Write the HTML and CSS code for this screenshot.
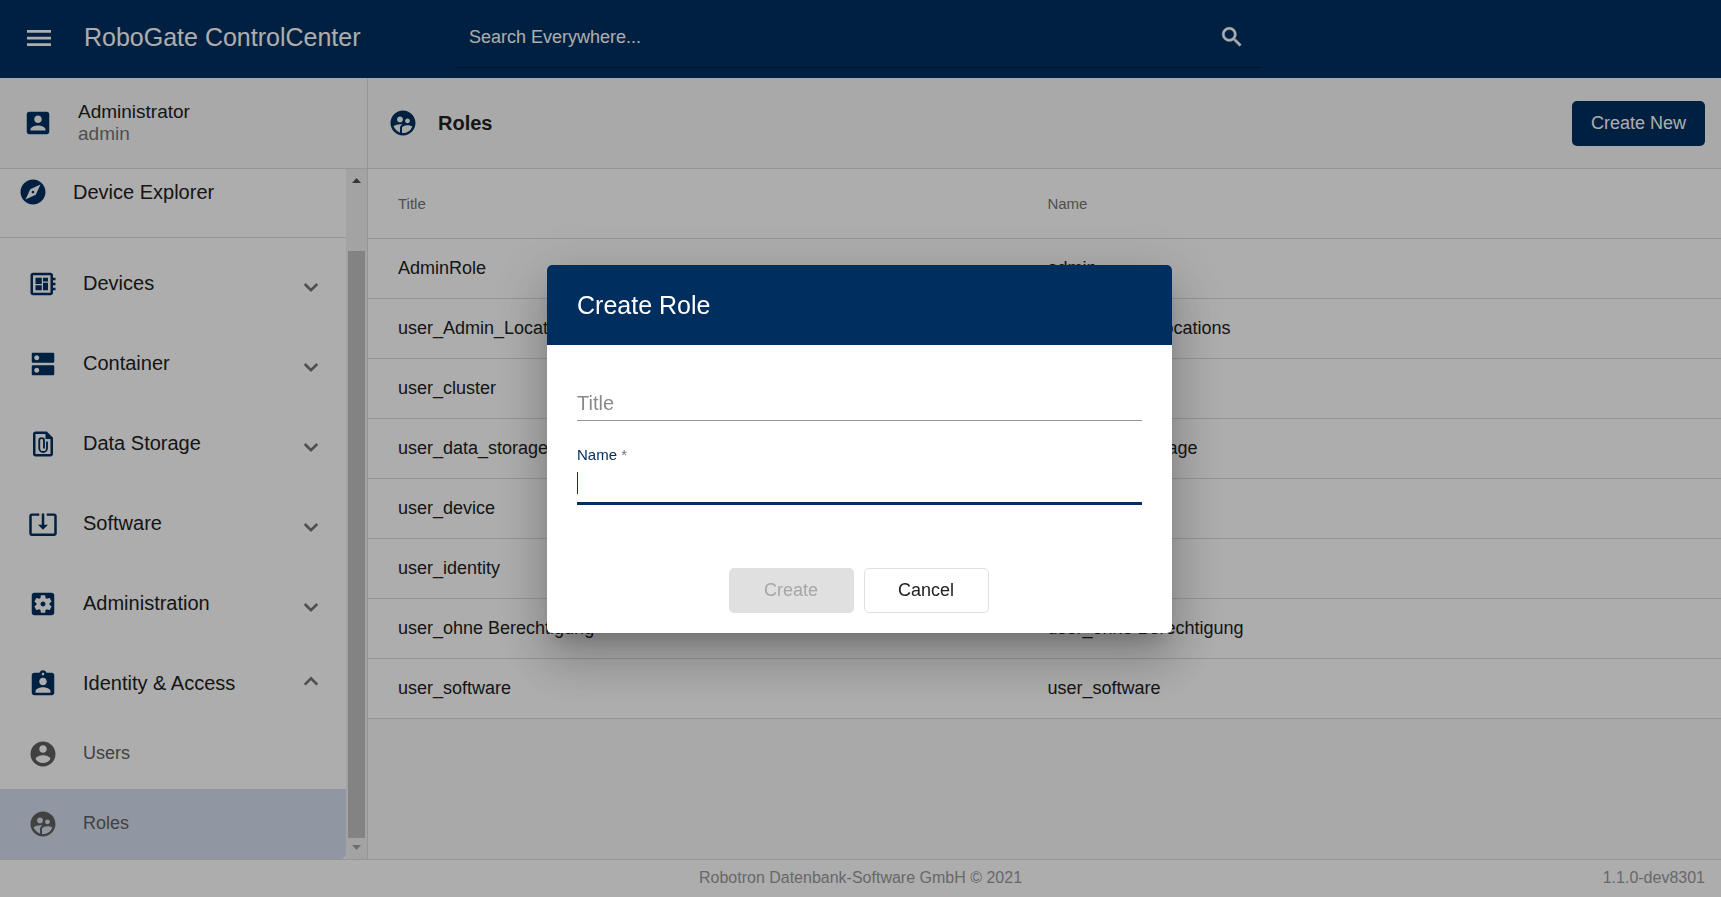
FILE: index.html
```html
<!DOCTYPE html>
<html lang="en">
<head>
<meta charset="utf-8">
<title>RoboGate ControlCenter</title>
<link rel="stylesheet" href="styles.css">
</head>
<body>
<svg class="sprite" aria-hidden="true">
  <symbol id="i-roles" viewBox="0 0 24 24"><path d="M11.99 2c-5.52 0-10 4.48-10 10s4.48 10 10 10 10-4.48 10-10-4.48-10-10-10zm3.61 6.34c1.07 0 1.93.86 1.93 1.93 0 1.07-.86 1.93-1.93 1.93-1.07 0-1.93-.86-1.93-1.93-.01-1.07.86-1.93 1.93-1.93zm-6-1.58c1.3 0 2.36 1.06 2.36 2.36 0 1.3-1.06 2.36-2.36 2.36s-2.36-1.06-2.36-2.36c0-1.31 1.05-2.36 2.36-2.36zm0 9.13v3.75c-2.4-.75-4.3-2.6-5.14-4.96 1.05-1.12 3.67-1.69 5.14-1.69.53 0 1.2.08 1.9.22-1.64.87-1.9 2.02-1.9 2.68zM11.99 20c-.27 0-.53-.01-.79-.04v-4.07c0-1.42 2.94-2.13 4.4-2.13 1.07 0 2.92.39 3.84 1.15-1.17 2.97-4.06 5.09-7.45 5.09z"/></symbol>
  <symbol id="i-down" viewBox="0 0 24 24"><path d="M7 12l5 5 5-5" fill="none" stroke="currentColor" stroke-width="2.1"/></symbol>
  <symbol id="i-up" viewBox="0 0 24 24"><path d="M7 12.500l5-5 5 5" fill="none" stroke="currentColor" stroke-width="2.1"/></symbol>
</svg>
<div class="app">
  <header class="topbar">
    <div class="brand">
      <button class="icon-button" type="button" aria-label="Menu"><svg class="icon" viewBox="0 0 24 24"><path d="M2.4 18.4h19.2v-2.2H2.4zm0-5.3h19.2v-2.2H2.4zm0-7.5v2.2h19.2V5.6z"/></svg></button>
      <span class="brand-name">RoboGate ControlCenter</span>
    </div>
    <form class="search">
      <input class="search-input" type="text" placeholder="Search Everywhere..." aria-label="Search Everywhere">
      <button class="icon-button" type="button" aria-label="Search"><svg class="icon icon-search" viewBox="0 0 24 24"><path stroke="currentColor" stroke-width=".5" d="M15.5 14h-.79l-.28-.27C15.41 12.59 16 11.11 16 9.5 16 5.91 13.09 3 9.5 3S3 5.91 3 9.5 5.91 16 9.5 16c1.61 0 3.09-.59 4.23-1.57l.27.28v.79l5 4.99L20.49 19l-4.99-5zm-6 0C7.01 14 5 11.99 5 9.5S7.01 5 9.5 5 14 7.01 14 9.5 11.99 14 9.5 14z"/></svg></button>
    </form>
  </header>

  <div class="content">
    <aside class="sidebar">
      <div class="user">
        <svg class="icon blue" viewBox="0 0 24 24"><path d="M3 5v14c0 1.1.89 2 2 2h14c1.1 0 2-.9 2-2V5c0-1.1-.9-2-2-2H5c-1.11 0-2 .9-2 2zm12 4c0 1.66-1.34 3-3 3s-3-1.34-3-3 1.34-3 3-3 3 1.34 3 3zm-9 8c0-2 4-3.1 6-3.1s6 1.1 6 3.1v1H6v-1z"/></svg>
        <div class="user-text"><span>Administrator</span><span class="muted">admin</span></div>
      </div>
      <div class="scroller">
        <nav class="nav">
          <a class="nav-first" href="#"><svg class="icon blue" viewBox="0 0 24 24"><path d="M12 10.9c-.61 0-1.1.49-1.1 1.1s.49 1.1 1.1 1.1c.61 0 1.1-.49 1.1-1.1s-.49-1.1-1.1-1.1zM12 2C6.48 2 2 6.48 2 12s4.48 10 10 10 10-4.48 10-10S17.52 2 12 2zm2.19 12.19L6 18l3.81-8.19L18 6l-3.81 8.19z"/></svg>Device Explorer</a>
          <a class="nav-item" href="#"><svg class="icon blue" viewBox="0 0 24 24"><path d="M22 9V7h-2V5c0-1.1-.9-2-2-2H4c-1.1 0-2 .9-2 2v14c0 1.1.9 2 2 2h14c1.1 0 2-.9 2-2v-2h2v-2h-2v-2h2v-2h-2V9h2zm-4 10H4V5h14v14zM6 13h5v4H6zm6-6h4v3h-4zM6 7h5v5H6zm6 4h4v6h-4z"/></svg><span class="nav-label">Devices</span><svg class="chevron"><use href="#i-down"/></svg></a>
          <a class="nav-item" href="#"><svg class="icon blue" viewBox="0 0 24 24"><path d="M20 13H4c-.55 0-1 .45-1 1v6c0 .55.45 1 1 1h16c.55 0 1-.45 1-1v-6c0-.55-.45-1-1-1zM7 19c-1.1 0-2-.9-2-2s.9-2 2-2 2 .9 2 2-.9 2-2 2zM20 3H4c-.55 0-1 .45-1 1v6c0 .55.45 1 1 1h16c.55 0 1-.45 1-1V4c0-.55-.45-1-1-1zM7 9c-1.1 0-2-.9-2-2s.9-2 2-2 2 .9 2 2-.9 2-2 2z"/></svg><span class="nav-label">Container</span><svg class="chevron"><use href="#i-down"/></svg></a>
          <a class="nav-item" href="#"><svg class="icon blue" viewBox="0 0 24 24"><path fill-rule="evenodd" d="M15 2H6c-1.1 0-2 .9-2 2v16c0 1.1.9 2 2 2h12c1.1 0 2-.9 2-2V7l-5-5zM6 20V4h8v4h4v12H6z"/><path d="M15.200 10v5.300a3.100 3.100 0 0 1-6.200 0V9.200a1.900 1.900 0 0 1 3.800 0V15.500" fill="none" stroke="currentColor" stroke-width="1.500"/></svg><span class="nav-label">Data Storage</span><svg class="chevron"><use href="#i-down"/></svg></a>
          <a class="nav-item" href="#"><svg class="icon blue" viewBox="0 0 24 24"><path d="M12 16.5l4-4h-3v-9h-2v9H8l4 4zm9-13h-6v1.99h6v14.03H3V5.490h6V3.500H3c-1.100 0-2 .9-2 2v14c0 1.100.9 2 2 2h18c1.100 0 2-.9 2-2v-14c0-1.100-.9-2-2-2z"/></svg><span class="nav-label">Software</span><svg class="chevron"><use href="#i-down"/></svg></a>
          <a class="nav-item" href="#"><svg class="icon blue" viewBox="0 0 24 24"><path d="M12 10c-1.1 0-2 .9-2 2s.9 2 2 2 2-.9 2-2-.9-2-2-2zm7-7H5c-1.11 0-2 .9-2 2v14c0 1.1.89 2 2 2h14c1.11 0 2-.9 2-2V5c0-1.1-.89-2-2-2zm-1.75 9c0 .23-.02.46-.05.68l1.48 1.16c.13.11.17.3.08.45l-1.400 2.420c-.09.15-.27.21-.43.15l-1.740-.7c-.36.28-.76.51-1.180.69l-.26 1.850c-.03.170-.180.300-.350.300h-2.800c-.170 0-.320-.130-.350-.290l-.260-1.850c-.430-.180-.820-.410-1.180-.690l-1.740.7c-.160.06-.340 0-.430-.150l-1.400-2.420c-.090-.150-.050-.340.080-.450l1.480-1.160c-.030-.230-.050-.460-.050-.690 0-.230.020-.460.050-.680l-1.480-1.160c-.130-.110-.170-.300-.080-.450l1.400-2.420c.090-.150.270-.210.430-.150l1.740.7c.360-.280.760-.510 1.180-.690l.260-1.850c.030-.170.180-.300.350-.300h2.800c.170 0 .320.130.350.290l.260 1.850c.430.180.820.410 1.180.690l1.740-.7c.160-.060.340 0 .430.150l1.400 2.420c.090.150.050.340-.080.450l-1.480 1.160c.030.230.050.460.050.690z"/></svg><span class="nav-label">Administration</span><svg class="chevron"><use href="#i-down"/></svg></a>
          <a class="nav-item" href="#"><svg class="icon blue" viewBox="0 0 24 24"><path d="M19 3h-4.180C14.400 1.840 13.300 1 12 1c-1.300 0-2.400.840-2.820 2H5c-1.100 0-2 .9-2 2v14c0 1.100.9 2 2 2h14c1.100 0 2-.9 2-2V5c0-1.100-.9-2-2-2zm-7 0c.550 0 1 .450 1 1s-.450 1-1 1-1-.450-1-1 .450-1 1-1zm0 4c1.660 0 3 1.340 3 3s-1.340 3-3 3-3-1.340-3-3 1.340-3 3-3zm6 12H6v-1.400c0-2 4-3.100 6-3.100s6 1.100 6 3.100V19z"/></svg><span class="nav-label">Identity &amp; Access</span><svg class="chevron"><use href="#i-up"/></svg></a>
          <a class="nav-sub" href="#"><svg class="icon" viewBox="0 0 24 24"><path d="M12 2C6.480 2 2 6.480 2 12s4.480 10 10 10 10-4.480 10-10S17.520 2 12 2zm0 3c1.660 0 3 1.340 3 3s-1.340 3-3 3-3-1.340-3-3 1.340-3 3-3zm0 14.200c-2.500 0-4.710-1.280-6-3.220.030-1.990 4-3.080 6-3.080 1.990 0 5.970 1.090 6 3.080-1.290 1.940-3.500 3.220-6 3.220z"/></svg><span class="sub-label">Users</span></a>
          <a class="nav-sub selected" href="#"><svg class="icon"><use href="#i-roles"/></svg><span class="sub-label">Roles</span></a>
        </nav>
        <div class="scrollbar" aria-hidden="true">
          <svg class="arrow" viewBox="0 0 21 21"><path d="M6 14h9l-4.500-5z"/></svg>
          <div class="track"><div class="thumb"></div></div>
          <svg class="arrow faint" viewBox="0 0 21 21"><path d="M6 7h9l-4.500 5z"/></svg>
        </div>
      </div>
    </aside>

    <main class="main">
      <div class="page-head">
        <svg class="icon blue"><use href="#i-roles"/></svg>
        <h1 class="page-title">Roles</h1>
        <button class="button primary" type="button">Create New</button>
      </div>
      <table class="roles">
        <thead><tr><th>Title</th><th>Name</th></tr></thead>
        <tbody>
          <tr><td>AdminRole</td><td>admin</td></tr>
          <tr><td>user_Admin_Locations</td><td>user_Admin_Locations</td></tr>
          <tr><td>user_cluster</td><td>user_cluster</td></tr>
          <tr><td>user_data_storage</td><td>user_data_storage</td></tr>
          <tr><td>user_device</td><td>user_device</td></tr>
          <tr><td>user_identity</td><td>user_identity</td></tr>
          <tr><td>user_ohne Berechtigung</td><td>user_ohne Berechtigung</td></tr>
          <tr><td>user_software</td><td>user_software</td></tr>
        </tbody>
      </table>
    </main>
  </div>

  <footer class="footer"><span></span><span>Robotron Datenbank-Software GmbH © 2021</span><span class="version">1.1.0-dev8301</span></footer>
</div>

<div class="backdrop">
  <form class="dialog" role="dialog" aria-modal="true" aria-labelledby="dialog-title">
    <h2 class="dialog-title" id="dialog-title">Create Role</h2>
    <div class="dialog-body">
      <div class="field">
        <label class="field-label floating" for="role-title">Title</label>
        <input class="field-input" id="role-title" type="text">
      </div>
      <div class="field focused">
        <label class="field-label" for="role-name">Name <span class="required">*</span></label>
        <input class="field-input" id="role-name" type="text" required>
        <span class="caret"></span>
      </div>
      <div class="actions">
        <button class="button disabled" type="submit" disabled>Create</button>
        <button class="button outline" type="button">Cancel</button>
      </div>
    </div>
  </form>
</div>
</body>
</html>
```

FILE: styles.css
```css
* { box-sizing: border-box; }

body {
  margin: 0;
  font-family: "Liberation Sans", Arial, sans-serif;
  font-size: 18px;
  color: #212121;
}

button, input { font: inherit; }

a { color: inherit; text-decoration: none; }

.sprite { display: none; }

.app {
  display: flex;
  flex-direction: column;
  height: 100vh;
  overflow: hidden;
  background: #fafafa;
}

.icon {
  flex: none;
  display: block;
  width: 30px;
  height: 30px;
  fill: currentColor;
}

.blue { color: #003062; }

.icon-button {
  padding: 0;
  border: 0;
  background: none;
  color: inherit;
}

/* Top bar */
.topbar {
  display: flex;
  flex: none;
  height: 78px;
  background: #003062;
  color: #fff;
}

.brand {
  display: flex;
  align-items: center;
  gap: 30px;
  width: 456px;
  padding: 0 24px 2px;
}

.brand-name { padding-bottom: 2px; font-size: 25px; }

.search {
  display: flex;
  align-items: center;
  width: 806px;
  margin: 7px 0 10px;
  padding: 0 17px 0 13px;
  border-bottom: 1px solid #001c3a;
}

.search-input {
  flex: 1;
  min-width: 0;
  padding: 0;
  border: 0;
  outline: 0;
  background: none;
  color: #fff;
}

.search-input::placeholder { color: #fff; opacity: 1; }

.icon-search { width: 26px; height: 26px; }

/* Sidebar */
.content {
  display: flex;
  flex: 1;
  min-height: 0;
}

.sidebar {
  display: flex;
  flex-direction: column;
  flex: none;
  width: 368px;
  border-right: 1px solid #dcdcdc;
}

.user {
  display: flex;
  flex: none;
  align-items: center;
  gap: 25px;
  height: 91px;
  padding-left: 23px;
  border-bottom: 1px solid #dcdcdc;
}

.user-text {
  display: flex;
  flex-direction: column;
  font-size: 19px;
  line-height: 22px;
}

.muted { color: #757575; }

.scroller {
  display: flex;
  flex: 1;
  min-height: 0;
}

.nav {
  flex: 1;
  overflow: hidden;
  background: #fff;
  font-size: 20px;
}

.nav-first {
  display: flex;
  align-items: center;
  gap: 25px;
  margin-bottom: 1px;
  padding: 8px 0 30px 18px;
  border-bottom: 1px solid #dcdcdc;
}

.nav-item {
  display: flex;
  align-items: center;
  gap: 25px;
  height: 80px;
  padding: 10px 20px 0 28px;
}

.nav-label { flex: 1; padding-bottom: 2px; }

.chevron { width: 30px; height: 30px; color: #757575; }

.nav-sub {
  display: flex;
  align-items: center;
  gap: 25px;
  height: 70px;
  padding-left: 28px;
  font-size: 18px;
  color: #616161;
}

.sub-label { padding-bottom: 2px; }

.selected {
  border-bottom-right-radius: 5px;
  background: #d5deef;
}

.scrollbar {
  display: flex;
  flex-direction: column;
  flex: none;
  width: 21px;
  background: #f1f1f1;
}

.arrow { width: 21px; height: 21px; fill: #505050; }

.faint { fill: #a3a3a3; }

.track { flex: 1; padding: 61px 2px 0; }

.thumb { height: 100%; background: #c1c1c1; }

/* Main area */
.main { flex: 1; min-width: 0; }

.page-head {
  display: flex;
  align-items: center;
  gap: 20px;
  height: 91px;
  padding: 0 16px 0 20px;
  border-bottom: 1px solid #dcdcdc;
}

.page-title {
  flex: 1;
  margin: 0;
  font-size: 20px;
}

.button {
  min-width: 125px;
  height: 45px;
  padding: 0 18px;
  border: 1px solid transparent;
  border-radius: 5px;
}

.primary { background: #003062; color: #fff; }

.disabled { background: #e0e0e0; color: #a6a6a6; }

.outline { border-color: #e0e0e0; background: #fff; color: #212121; }

.roles {
  width: 100%;
  border-collapse: separate;
  border-spacing: 0;
  table-layout: fixed;
  background: #fff;
}

.roles th, .roles td {
  height: 60px;
  padding: 0 0 0 30px;
  border-bottom: 1px solid #dcdcdc;
  text-align: left;
}

.roles th {
  width: 52%;
  height: 70px;
  font-size: 15px;
  font-weight: 400;
  color: #757575;
}

.roles th:first-child { width: 48%; }

/* Footer */
.footer {
  display: grid;
  grid-template-columns: 1fr auto 1fr;
  align-items: center;
  flex: none;
  height: 38px;
  padding: 0 16px 2px;
  border-top: 1px solid #dcdcdc;
  background: #fff;
  font-size: 16px;
  color: #9a9a9a;
}

.version { text-align: right; }

/* Dialog */
.backdrop {
  position: fixed;
  inset: 0;
  display: flex;
  align-items: center;
  justify-content: center;
  padding-right: 2px;
  background: rgba(0, 0, 0, 0.32);
}

.dialog {
  width: 625px;
  overflow: hidden;
  border-radius: 5px;
  background: #fff;
  box-shadow:
    0 14px 19px -9px rgba(0, 0, 0, 0.2),
    0 30px 48px 4px rgba(0, 0, 0, 0.14),
    0 11px 58px 10px rgba(0, 0, 0, 0.12);
}

.dialog-title {
  margin: 0;
  padding: 0 30px;
  background: #002f5f;
  color: #fff;
  font-size: 25px;
  font-weight: 400;
  line-height: 80px;
}

.dialog-body { padding: 40px 30px 20px; }

.field { position: relative; }

.field-input {
  display: block;
  width: 100%;
  height: 36px;
  padding: 0;
  border: 0;
  border-bottom: 1px solid #949494;
  border-radius: 0;
  outline: 0;
  background: transparent;
  font-size: 20px;
}

.field-label {
  display: block;
  font-size: 15px;
  line-height: 20px;
  color: #003062;
}

/* The label rests over an empty, unfocused input */
.floating {
  position: absolute;
  bottom: 8px;
  left: 0;
  font-size: 20px;
  color: #8a8a8a;
  pointer-events: none;
}

.focused { padding-top: 24px; }

.focused .field-input {
  height: 40px;
  border-bottom: 3px solid #003062;
}

.required { color: #757575; }

.caret {
  position: absolute;
  bottom: 11px;
  left: 0;
  width: 1px;
  height: 22px;
  background: #003062;
}

.actions {
  display: flex;
  justify-content: center;
  gap: 10px;
  padding: 63px 2px 0 0;
}
```
